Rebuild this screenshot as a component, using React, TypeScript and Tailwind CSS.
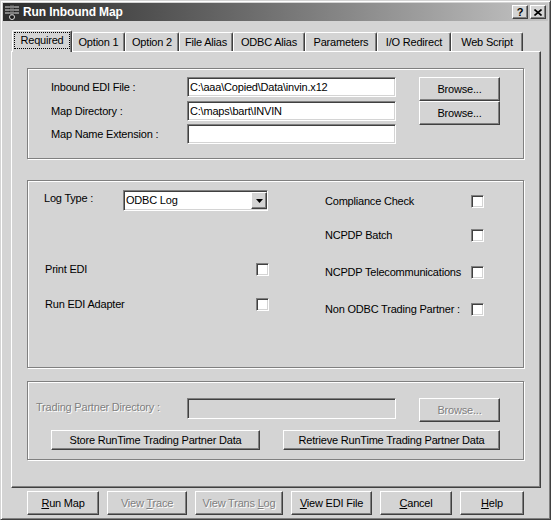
const raised =
  "border border-t-white border-l-white border-r-[#404040] border-b-[#404040] shadow-[inset_-1px_-1px_0_#808080] bg-[#d4d4d4]";
const sunken =
  "border border-t-[#808080] border-l-[#808080] border-r-white border-b-white shadow-[inset_1px_1px_0_#404040,inset_-1px_-1px_0_#d4d4d4]";
const etched = "border border-[#808080] shadow-[1px_1px_0_#fff,inset_1px_1px_0_#fff]";
const disabledText = "text-[#808080] [text-shadow:1px_1px_0_#fff]";

function Btn({
  children,
  w,
  h = 24,
  disabled,
}: {
  children: React.ReactNode;
  w: string;
  h?: number;
  disabled?: boolean;
}) {
  return (
    <div
      className={`${raised} ${w} ${h === 24 ? "h-[24px]" : "h-[20px]"} flex items-center justify-center shrink-0 ${
        disabled ? disabledText : "text-black"
      }`}
    >
      {children}
    </div>
  );
}

function Check() {
  return <div className={`${sunken} w-[13px] h-[13px] bg-white shrink-0`} />;
}

function Tab({ label, w, active }: { label: string; w: string; active?: boolean }) {
  if (active) {
    return (
      <div
        className={`${w} h-[22px] -mb-[1px] relative z-10 bg-[#d4d4d4] border-l border-t border-l-white border-t-white border-r border-r-[#404040] shadow-[inset_-1px_0_0_#808080] rounded-tl-[2px] rounded-tr-[2px] px-[1px] pt-[1px]`}
      >
        <div className="border border-dotted border-black h-[17px] flex items-center justify-center">
          {label}
        </div>
      </div>
    );
  }
  return (
    <div
      className={`${w} h-[19px] bg-[#d4d4d4] border-l border-t border-l-white border-t-white border-r border-r-[#404040] shadow-[inset_-1px_0_0_#808080] rounded-tl-[2px] rounded-tr-[2px] flex items-center justify-center pt-[1px]`}
    >
      {label}
    </div>
  );
}

function AppIcon() {
  return (
    <svg width="16" height="16" viewBox="0 0 16 16" className="shrink-0">
      <rect x="5" y="1" width="6" height="12" rx="2" fill="#1a1a1a" />
      <circle cx="8" cy="13" r="2.5" fill="#1a1a1a" stroke="#ddd" strokeWidth="1" />
      <path d="M1 3h14M1 6h14M1 9h14" stroke="#ddd" strokeWidth="1" />
      <path d="M6 2h4M6 5h4M6 8h4M6 11h4" stroke="#888" strokeWidth="1" />
    </svg>
  );
}

export default function App() {
  return (
    <div className="w-[551px] h-[520px] bg-[#d4d4d4] border border-t-[#d4d4d4] border-l-[#d4d4d4] border-r-[#404040] border-b-[#404040] shadow-[inset_1px_1px_0_#fff,inset_-1px_-1px_0_#808080] p-[2px] font-['Liberation_Sans',Arial,sans-serif] text-[11px] tracking-[-0.2px] text-black leading-none select-none">
      {/* title bar */}
      <div className="h-[18px] bg-gradient-to-r from-[#2c2c2c] to-[#c4c4c4] flex items-center pl-[1px] pr-[2px]">
        <AppIcon />
        <span className="ml-[3px] text-white font-bold text-[12px] tracking-[-0.1px]">Run Inbound Map</span>
        <div className="ml-auto flex items-center">
          <div className={`${raised} w-[16px] h-[14px] flex items-center justify-center font-bold text-[11px]`}>?</div>
          <div className={`${raised} w-[16px] h-[14px] ml-[2px] flex items-center justify-center`}>
            <svg width="8" height="7" viewBox="0 0 8 7">
              <path d="M0.5 0.5L7.5 6.5M7.5 0.5L0.5 6.5" stroke="#000" strokeWidth="1.6" />
            </svg>
          </div>
        </div>
      </div>

      {/* tabs */}
      <div className="mt-[9px] h-[21px] pl-[9px] flex items-end">
        <Tab label="Required" w="w-[60px]" active />
        <Tab label="Option 1" w="w-[53px]" />
        <Tab label="Option 2" w="w-[54px]" />
        <Tab label="File Alias" w="w-[54px]" />
        <Tab label="ODBC Alias" w="w-[72px]" />
        <Tab label="Parameters" w="w-[72px]" />
        <Tab label="I/O Redirect" w="w-[74px]" />
        <Tab label="Web Script" w="w-[72px]" />
      </div>

      {/* tab panel */}
      <div className="ml-[8px] w-[530px] h-[437px] border border-t-white border-l-white border-r-[#404040] border-b-[#404040] shadow-[inset_-1px_-1px_0_#808080] pl-[15px] pt-[16px]">
        {/* group 1 */}
        <div className={`${etched} w-[497px] h-[91px] flex pt-[8px] pl-[23px]`}>
          <div className="flex flex-col">
            <div className="flex items-center h-[20px]">
              <span className="w-[136px]">Inbound EDI File :</span>
              <div className={`${sunken} w-[209px] h-[20px] bg-white flex items-center pl-[2px]`}>
                C:\aaa\Copied\Data\invin.x12
              </div>
            </div>
            <div className="flex items-center h-[20px] mt-[4px]">
              <span className="w-[136px]">Map Directory :</span>
              <div className={`${sunken} w-[209px] h-[20px] bg-white flex items-center pl-[2px]`}>
                C:\maps\bart\INVIN
              </div>
            </div>
            <div className="flex items-center h-[20px] mt-[3px]">
              <span className="w-[136px]">Map Name Extension :</span>
              <div className={`${sunken} w-[209px] h-[20px] bg-white`} />
            </div>
          </div>
          <div className="ml-[23px] flex flex-col">
            <Btn w="w-[81px]">Browse...</Btn>
            <Btn w="w-[81px]">Browse...</Btn>
          </div>
        </div>

        {/* group 2 */}
        <div className={`${etched} w-[497px] h-[188px] mt-[21px] flex`}>
          <div className="pl-[16px] pt-[9px] w-[241px] flex flex-col">
            <div className="flex items-start">
              <span className="w-[79px] pt-[3px]">Log Type :</span>
              <div className={`${sunken} w-[145px] h-[21px] bg-white flex items-center`}>
                <span className="pl-[2px] flex-1">ODBC Log</span>
                <div className={`${raised} w-[16px] h-[17px] flex items-center justify-center`}>
                  <svg width="7" height="4" viewBox="0 0 7 4">
                    <path d="M0 0h7L3.5 4z" fill="#000" />
                  </svg>
                </div>
              </div>
            </div>
            <div className="flex items-center justify-between mt-[52px] h-[13px] pl-[1px]">
              <span>Print EDI</span>
              <Check />
            </div>
            <div className="flex items-center justify-between mt-[22px] h-[13px] pl-[1px]">
              <span>Run EDI Adapter</span>
              <Check />
            </div>
          </div>
          <div className="ml-[56px] pt-[14px] w-[159px] flex flex-col">
            <div className="flex items-center justify-between h-[13px]">
              <span>Compliance Check</span>
              <Check />
            </div>
            <div className="flex items-center justify-between h-[13px] mt-[21px]">
              <span>NCPDP Batch</span>
              <Check />
            </div>
            <div className="flex items-center justify-between h-[13px] mt-[24px]">
              <span>NCPDP Telecommunications</span>
              <Check />
            </div>
            <div className="flex items-center justify-between h-[13px] mt-[24px]">
              <span>Non ODBC Trading Partner :</span>
              <Check />
            </div>
          </div>
        </div>

        {/* group 3 */}
        <div className={`${etched} w-[497px] h-[79px] mt-[13px] pt-[16px]`}>
          <div className="flex items-start pl-[8px]">
            <span className={`w-[151px] pt-[4px] ${disabledText}`}>Trading Partner Directory :</span>
            <div className={`${sunken} w-[209px] h-[21px] bg-[#d4d4d4]`} />
            <div className="ml-[23px]">
              <Btn w="w-[81px]" disabled>
                Browse...
              </Btn>
            </div>
          </div>
          <div className="flex pl-[23px] mt-[8px]">
            <Btn w="w-[209px]" h={20}>
              Store RunTime Trading Partner Data
            </Btn>
            <div className="ml-[23px]">
              <Btn w="w-[217px]" h={20}>
                Retrieve RunTime Trading Partner Data
              </Btn>
            </div>
          </div>
        </div>
      </div>

      {/* bottom buttons */}
      <div className="flex gap-[8px] ml-[24px] mt-[3px]">
        <Btn w="w-[72px]">
          <span>
            <u>R</u>un Map
          </span>
        </Btn>
        <Btn w="w-[80px]" disabled>
          <span>
            View <u>T</u>race
          </span>
        </Btn>
        <Btn w="w-[88px]" disabled>
          <span>
            View Trans <u>L</u>og
          </span>
        </Btn>
        <Btn w="w-[81px]">
          <span>
            <u>V</u>iew EDI File
          </span>
        </Btn>
        <Btn w="w-[72px]">
          <span>
            <u>C</u>ancel
          </span>
        </Btn>
        <Btn w="w-[64px]">
          <span>
            <u>H</u>elp
          </span>
        </Btn>
      </div>
    </div>
  );
}
